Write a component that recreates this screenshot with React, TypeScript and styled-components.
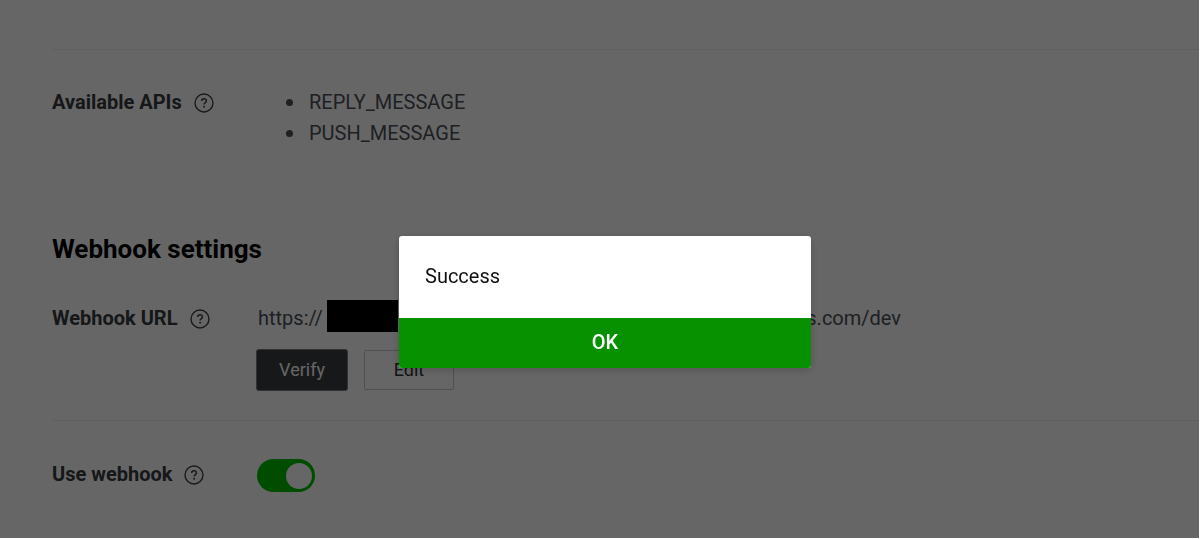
import React, { useState } from "react";
import styled, { createGlobalStyle } from "styled-components";

const GlobalStyle = createGlobalStyle`
  * { box-sizing: border-box; }
  body {
    margin: 0;
    background: #fff;
    color: #4c5058;
    font-family: Roboto, "Liberation Sans", sans-serif;
    font-size: 20px;
    line-height: 31px;
    overflow: hidden;
  }
`;

const Page = styled.main`
  min-height: 100vh;
  padding: 49px 0 0 52px;
`;

const Section = styled.section<{ $pad: number }>`
  display: flex;
  align-items: flex-start;
  border-top: ${(p) => (p.$pad ? "1px solid #efefef" : "0")};
  padding-top: ${(p) => p.$pad}px;
`;

const Label = styled.div`
  display: flex;
  align-items: center;
  gap: 12px;
  flex: 0 0 205px;
  color: #363a40;
  font-weight: 700;
  white-space: nowrap;
`;

const HelpButton = styled.button`
  display: flex;
  padding: 0;
  border: 0;
  background: none;
  color: #40444a;
`;

const ApiList = styled.ul`
  margin: 0 0 84px;
  padding-left: 29px;
  list-style: none;
`;

const Api = styled.li`
  display: flex;
  align-items: center;
  gap: 16px;
  &::before {
    content: "";
    width: 7px;
    height: 7px;
    border-radius: 50%;
    background: currentColor;
  }
`;

const Heading = styled.h2`
  margin: 0 0 38px;
  color: #000;
  font-size: 26px;
  line-height: 32px;
`;

const Field = styled.div`
  flex: 0 1 644px;
  padding-bottom: 30px;
`;

const Url = styled.div`
  display: flex;
  align-items: flex-start;
  height: 31px;
  padding-left: 1px;
`;

const Redaction = styled.span`
  width: 71px;
  height: 32px;
  margin: -3px 0 0 4px;
  background: #000;
`;

const UrlEnd = styled.span`
  margin-left: auto;
`;

const Actions = styled.div`
  display: flex;
  gap: 17px;
  margin-top: 16px;
`;

const Action = styled.button<{ $primary?: boolean }>`
  width: 90px;
  height: 40px;
  border: 1px solid ${(p) => (p.$primary ? "#3a3c41" : "#c8c8c8")};
  border-radius: 2px;
  background: ${(p) => (p.$primary ? "#3a3c41" : "#fff")};
  box-shadow: ${(p) => (p.$primary ? "0 0 0 1px #777b80" : "none")};
  color: ${(p) => (p.$primary ? "#fff" : "#303338")};
  font: 18px/24px Roboto, "Liberation Sans", sans-serif;
`;

const Toggle = styled.input`
  appearance: none;
  width: 58px;
  height: 33px;
  margin: 0;
  padding: 4px 3px;
  border-radius: 17px;
  background: #ccc;
  &::before {
    content: "";
    display: block;
    width: 26px;
    height: 26px;
    border-radius: 50%;
    background: #fff;
  }
  &:checked { background: #00c000; }
  &:checked::before { margin-left: auto; }
`;

const Overlay = styled.div`
  position: fixed;
  inset: 0 1px 1px 0;
  display: flex;
  align-items: flex-start;
  justify-content: center;
  padding: 236px 0 0 11px;
  background: rgba(0, 0, 0, 0.6);
`;

const Dialog = styled.div`
  width: 412px;
  border-radius: 3px;
  overflow: hidden;
  background: #fff;
  box-shadow: 0 2px 8px rgba(0, 0, 0, 0.2);
`;

const Message = styled.p`
  margin: 0;
  padding: 25px 26px 26px;
  color: #111;
`;

const OkButton = styled.button`
  display: block;
  width: 100%;
  height: 50px;
  padding: 0 0 2px;
  border: 0;
  background: #079100;
  color: #fff;
  font: 500 20px/24px Roboto, "Liberation Sans", sans-serif;
`;

function Help({ topic }: { topic: string }) {
  return (
    <HelpButton type="button" aria-label={`About ${topic}`}>
      <svg width="20" height="20" viewBox="0 0 20 20" fill="none" stroke="currentColor">
        <circle cx="10" cy="10" r="9" strokeWidth="1.4" />
        <path d="M7.6 8.1C7.6 6.6 8.6 5.7 10 5.7s2.4.9 2.4 2.2c0 1.7-2.3 1.9-2.3 3.7" strokeWidth="1.5" />
        <circle cx="10.1" cy="13.8" r="1" fill="currentColor" stroke="none" />
      </svg>
    </HelpButton>
  );
}

export default function App() {
  const [enabled, setEnabled] = useState(true);
  const [open, setOpen] = useState(true);
  return (
    <>
      <GlobalStyle />
      <Page>
        <Section $pad={37}>
          <Label>Available APIs <Help topic="Available APIs" /></Label>
          <ApiList>
            <Api>REPLY_MESSAGE</Api>
            <Api>PUSH_MESSAGE</Api>
          </ApiList>
        </Section>
        <Heading>Webhook settings</Heading>
        <Section $pad={0}>
          <Label>Webhook URL <Help topic="Webhook URL" /></Label>
          <Field>
            <Url>
              <span>https://</span>
              <Redaction />
              <UrlEnd>amazonaws.com/dev</UrlEnd>
            </Url>
            <Actions>
              <Action type="button" $primary>Verify</Action>
              <Action type="button">Edit</Action>
            </Actions>
          </Field>
        </Section>
        <Section $pad={38}>
          <Label>
            <label htmlFor="use-webhook">Use webhook</label>
            <Help topic="Use webhook" />
          </Label>
          <Toggle
            id="use-webhook"
            type="checkbox"
            role="switch"
            checked={enabled}
            onChange={(e) => setEnabled(e.target.checked)}
          />
        </Section>
      </Page>
      {open && (
        <Overlay>
          <Dialog role="alertdialog" aria-modal="true" aria-describedby="result">
            <Message id="result">Success</Message>
            <OkButton type="button" onClick={() => setOpen(false)}>OK</OkButton>
          </Dialog>
        </Overlay>
      )}
    </>
  );
}
